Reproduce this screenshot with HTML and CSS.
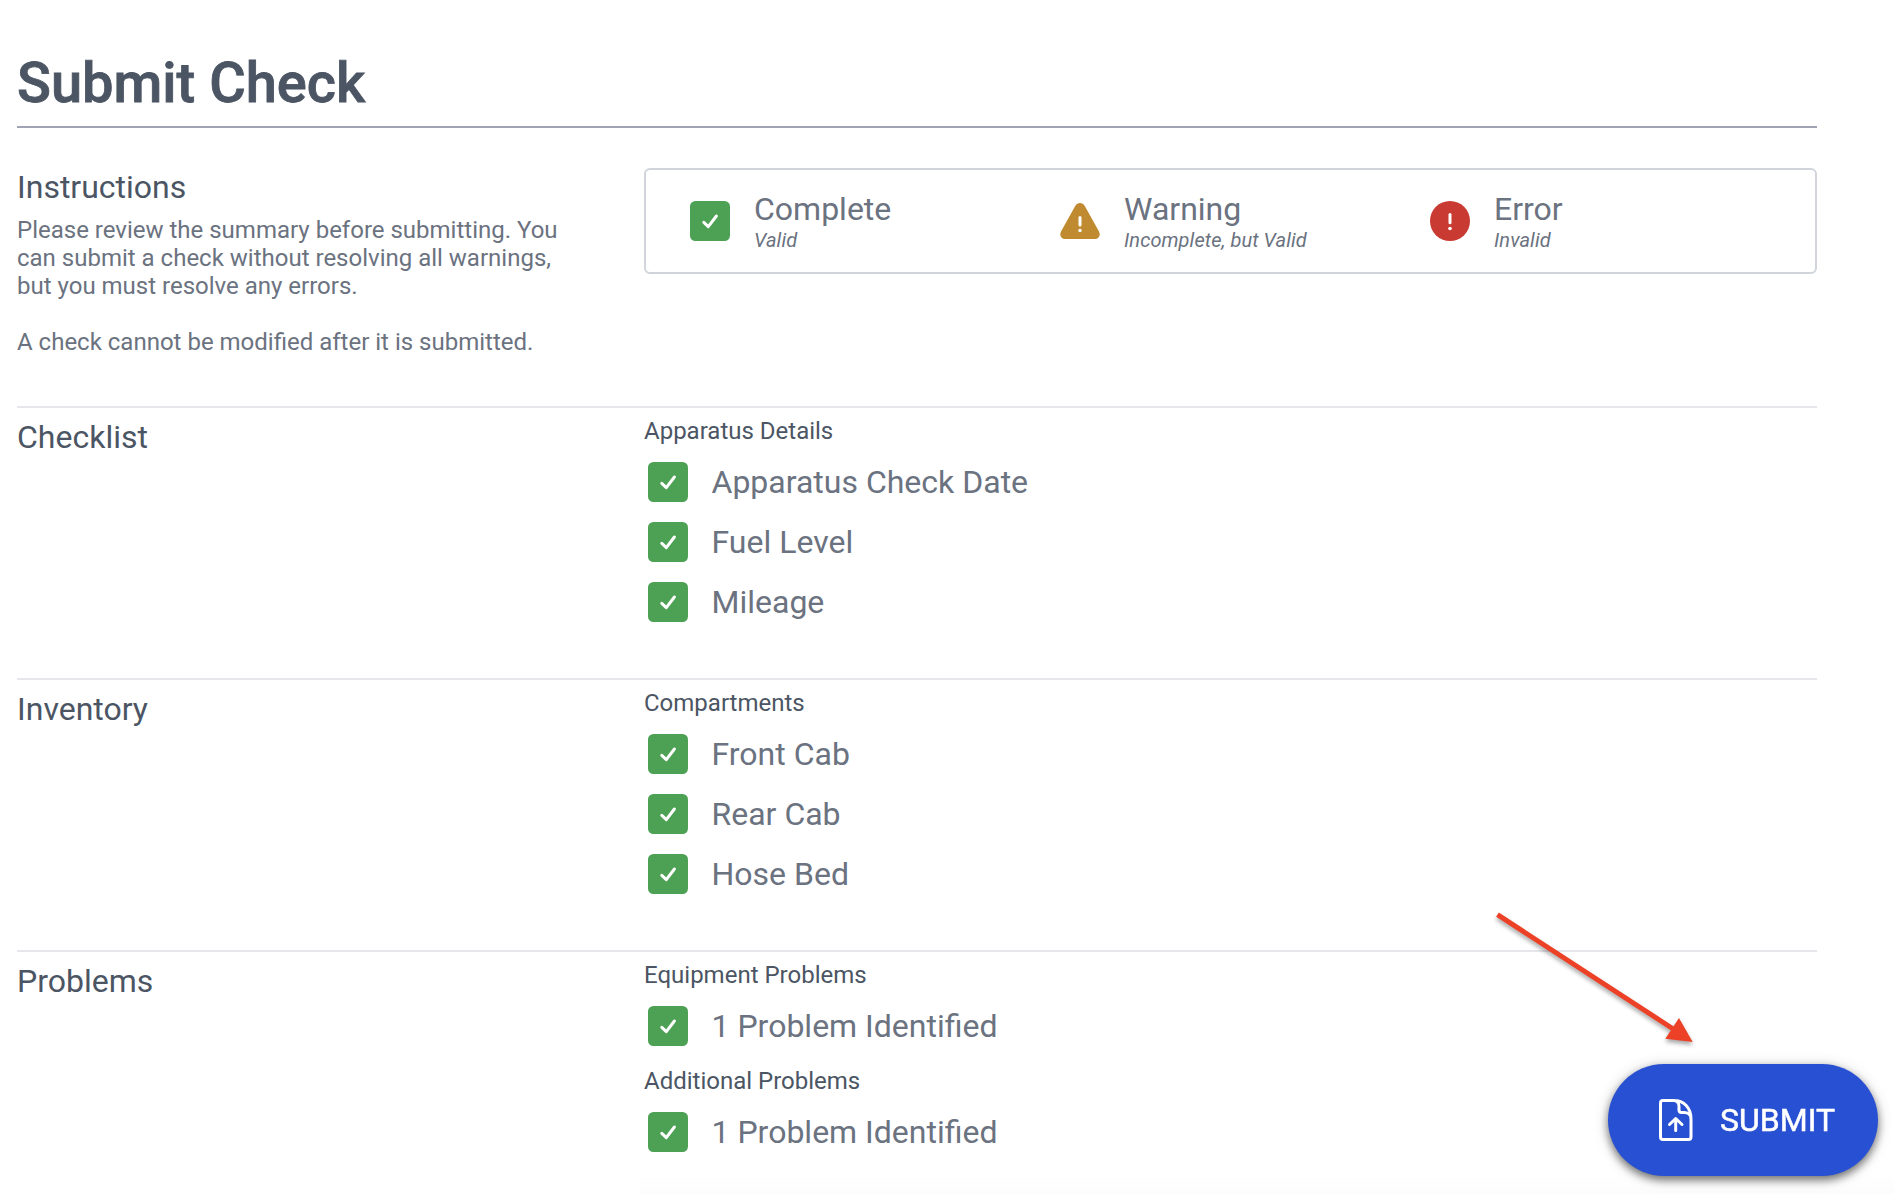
FILE: index.html
```html
<!DOCTYPE html>
<html lang="en">
<head>
<meta charset="utf-8">
<title>Submit Check</title>
<link rel="stylesheet" href="styles.css">
</head>
<body>
<svg class="defs" width="0" height="0" aria-hidden="true">
  <symbol id="ok" viewBox="0 0 40 40"><rect width="40" height="40" rx="5.5" fill="#4ca154"/><path d="M13.8 21.4l4.5 4.3 8.1-10.7" fill="none" stroke="#fff" stroke-width="3" stroke-linecap="round" stroke-linejoin="round"/></symbol>
  <symbol id="warn" viewBox="0 0 40 40"><path d="M15.2 4.9C17.2 1 22.8 1 24.8 4.9L39 30.5C41 34.3 38.6 38 34.6 38H5.4C1.4 38-1 34.3 1 30.5Z" fill="#c08b30"/><path d="M20 16.5v7.5" stroke="#fff" stroke-width="3" stroke-linecap="round"/><circle cx="20" cy="29.5" r="1.7" fill="#fff"/></symbol>
  <symbol id="err" viewBox="0 0 40 40"><circle cx="20" cy="20" r="20" fill="#c93a32"/><path d="M20 13.5v8.3" stroke="#fff" stroke-width="3" stroke-linecap="round"/><circle cx="20" cy="27.5" r="1.8" fill="#fff"/></symbol>
</svg>
<main class="page">
  <h1 class="title">Submit Check</h1>
  <section class="section intro">
    <div class="side">
      <h2 class="heading">Instructions</h2>
      <p class="text">Please review the summary before submitting. You<br>can submit a check without resolving all warnings,<br>but you must resolve any errors.</p>
      <p class="text">A check cannot be modified after it is submitted.</p>
    </div>
    <div class="legend">
      <div class="key"><svg class="icon"><use href="#ok"/></svg><div class="label">Complete<em class="hint">Valid</em></div></div>
      <div class="key"><svg class="icon"><use href="#warn"/></svg><div class="label">Warning<em class="hint">Incomplete, but Valid</em></div></div>
      <div class="key"><svg class="icon"><use href="#err"/></svg><div class="label">Error<em class="hint">Invalid</em></div></div>
    </div>
  </section>
  <section class="section">
    <h2 class="heading">Checklist</h2>
    <div class="items">
      <h3 class="group">Apparatus Details</h3>
      <div class="item"><svg class="icon"><use href="#ok"/></svg>Apparatus Check Date</div>
      <div class="item"><svg class="icon"><use href="#ok"/></svg>Fuel Level</div>
      <div class="item"><svg class="icon"><use href="#ok"/></svg>Mileage</div>
    </div>
  </section>
  <section class="section">
    <h2 class="heading">Inventory</h2>
    <div class="items">
      <h3 class="group">Compartments</h3>
      <div class="item"><svg class="icon"><use href="#ok"/></svg>Front Cab</div>
      <div class="item"><svg class="icon"><use href="#ok"/></svg>Rear Cab</div>
      <div class="item"><svg class="icon"><use href="#ok"/></svg>Hose Bed</div>
    </div>
  </section>
  <section class="section">
    <h2 class="heading">Problems</h2>
    <div class="items">
      <h3 class="group">Equipment Problems</h3>
      <div class="item"><svg class="icon"><use href="#ok"/></svg>1 Problem Identified</div>
      <h3 class="group">Additional Problems</h3>
      <div class="item"><svg class="icon"><use href="#ok"/></svg>1 Problem Identified</div>
    </div>
  </section>
</main>
<div class="fade"></div>
<svg class="arrow" width="220" height="150" viewBox="1485 905 220 150"><path d="M1497.5 914.7L1674 1029.5" stroke="#ec4126" stroke-width="5"/><path d="M1679 1018L1692.7 1042L1665.3 1038.8Z" fill="#ec4126"/></svg>
<button class="submit" type="button">
  <svg class="file" width="34" height="42" viewBox="0 0 34 42" fill="none" stroke="#fff" stroke-width="3" stroke-linecap="round" stroke-linejoin="round"><path d="M16 1.5H4Q1.5 1.5 1.5 4V38Q1.5 40.5 4 40.5H29.5Q32 40.5 32 38V20C32 8.5 25 1.500 14.5 1.5C18.5 1.5 20 4 20 7.5V11Q20 13.5 22.5 13.5H25C29 13.5 32 16 32 20"/><path d="M16.7 31.5V20M10.5 25.5L16.7 19.5L23 25.500"/></svg>
  <span>SUBMIT</span>
</button>
</body>
</html>
```
FILE: styles.css
```css
* { box-sizing: border-box; }
body {
  margin: 0;
  height: 1194px;
  overflow: hidden;
  background: #fff;
  color: #6b7280;
  font-family: Roboto, "Liberation Sans", sans-serif;
}
h1, h2, h3, p { margin: 0; font-weight: 400; }
.defs { position: absolute; }
.page { width: 1800px; margin-left: 17px; padding-top: 51px; }
.title {
  height: 77px;
  border-bottom: 2px solid #a0a3b3;
  color: #4b5563;
  font-size: 56px;
  font-weight: 500;
  line-height: 64px;
  -webkit-text-stroke: 0.8px #4b5563;
}
.section {
  display: grid;
  grid-template-columns: 627px minmax(0, 1fr);
  align-items: start;
  height: 272px;
  border-top: 2px solid #e5e7eb;
}
.intro { height: 278px; padding-top: 40px; border-top: 0; }
.heading { padding-top: 10px; color: #4b5563; font-size: 32px; line-height: 38px; }
.intro .heading { padding-top: 0; margin-bottom: 10px; }
.text { font-size: 24px; line-height: 28px; margin-bottom: 28px; white-space: nowrap; }
.legend {
  display: grid;
  grid-template-columns: repeat(3, 370px);
  height: 106px;
  padding: 20px 44px;
  border: 2px solid #d1d5db;
  border-radius: 6px;
}
.key { display: flex; gap: 24px; align-items: flex-start; }
.key .icon { margin-top: 11px; }
.icon { display: block; flex: none; width: 40px; height: 40px; }
.label { font-size: 32px; line-height: 38px; }
.hint { display: block; font-size: 20px; line-height: 24px; letter-spacing: 0.08px; }
.items { padding-top: 8.3px; }
.group { height: 46px; color: #4b5563; font-size: 24px; line-height: 31px; }
.item {
  display: flex;
  gap: 23.5px;
  height: 60px;
  padding-left: 4px;
  font-size: 32px;
  line-height: 40px;
}
.fade {
  position: fixed;
  right: 0;
  bottom: 0;
  width: 1254px;
  height: 20px;
  background: linear-gradient(#fff, #fcfcfc);
}
.arrow { position: absolute; left: 1485px; top: 905px; filter: drop-shadow(0 3px 2px rgba(0, 0, 0, .35)); }
.submit {
  position: fixed;
  right: 16px;
  bottom: 18px;
  display: flex;
  align-items: center;
  gap: 27px;
  width: 270px;
  height: 112px;
  padding: 0 0 0 51px;
  border: 0;
  border-radius: 56px;
  background: #2850d2;
  color: #fff;
  font: 400 32px/38px Roboto, "Liberation Sans", sans-serif;
  -webkit-text-stroke: 0.5px #fff;
  box-shadow: 0 4px 8px rgba(0, 0, 0, .5), 0 2px 16px rgba(0, 0, 0, .16);
}
```
